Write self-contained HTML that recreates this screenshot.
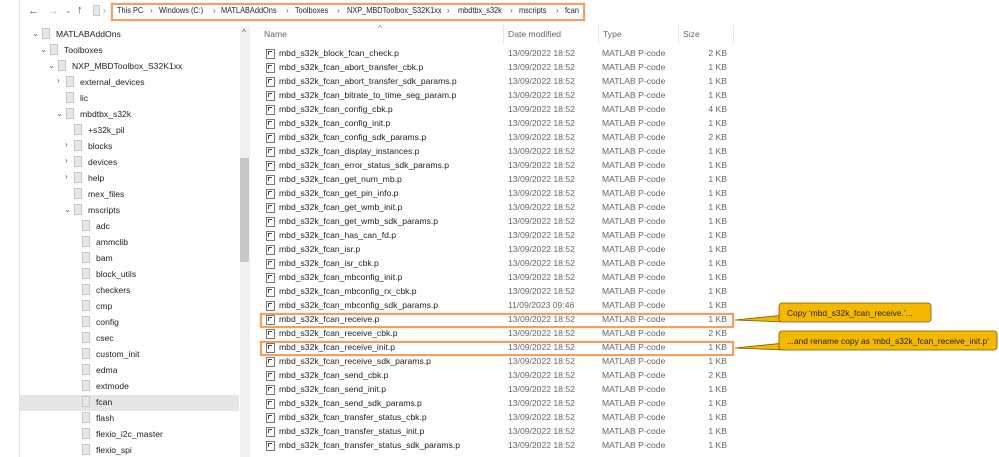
<!DOCTYPE html>
<html><head><meta charset="utf-8"><style>
*{margin:0;padding:0;box-sizing:border-box}
body{width:999px;height:457px;background:#fff;position:relative;overflow:hidden;font-family:"Liberation Sans",sans-serif;font-size:8.6px;color:#222}
.a{position:absolute;white-space:nowrap}
.fold{position:absolute;width:8px;height:11px;background:#e8e8e8;border:1px solid #c8c8c8}
.chev{position:absolute;font-size:8px;color:#555}
.fi{position:absolute;width:9px;height:10px;border:1px solid #777;background:#fff}
.fi:after{content:"";position:absolute;left:1px;top:1px;width:3px;height:3px;border-left:1px solid #444;border-top:1px solid #444}
.g{color:#666}
.bc{position:absolute;top:6px;font-size:8.2px;transform:scaleX(0.9);transform-origin:left}
.sp{position:absolute;top:6px;font-size:8px;color:#555}
</style></head><body>
<div class="a" style="left:19px;top:0;width:1px;height:457px;background:#ddd"></div>
<div class="a" style="left:28px;top:5px;color:#555;font-size:11px">←</div>
<div class="a" style="left:48px;top:5px;color:#bbb;font-size:11px">→</div>
<div class="a" style="left:65px;top:6px;color:#888;font-size:8px">⌄</div>
<div class="a" style="left:77px;top:4px;color:#444;font-size:11px">↑</div>
<div class="fold" style="left:93px;top:5px;width:7px"></div>
<div class="a" style="left:103px;top:6px;color:#888;font-size:8px">›</div>
<div class="a" style="left:111px;top:3px;width:474px;height:18px;border:2px solid #f0a060;box-shadow:0 0 2px #f7c9a8"></div>
<div class="bc" style="left:117px">This PC</div><div class="sp" style="left:150px">›</div>
<div class="bc" style="left:159px">Windows (C:)</div><div class="sp" style="left:213px">›</div>
<div class="bc" style="left:221px">MATLABAddOns</div><div class="sp" style="left:286px">›</div>
<div class="bc" style="left:295px">Toolboxes</div><div class="sp" style="left:337px">›</div>
<div class="bc" style="left:347px">NXP_MBDToolbox_S32K1xx</div><div class="sp" style="left:447px">›</div>
<div class="bc" style="left:458px">mbdtbx_s32k</div><div class="sp" style="left:510px">›</div>
<div class="bc" style="left:519px">mscripts</div><div class="sp" style="left:556px">›</div>
<div class="bc" style="left:565px">fcan</div>
<div class="a" style="left:20px;top:395px;width:219px;height:16px;background:#e5e5e5"></div>
<div class="a" style="left:240px;top:27px;width:10px;height:430px;background:#f0f0f0"></div>
<div class="a" style="left:240px;top:158px;width:9px;height:104px;background:#c8c8c8"></div>
<div class="a" style="left:242px;top:28px;font-size:8px;color:#444">^</div>
<div id="tree"></div>
<div class="a" style="left:378px;top:24px;font-size:8px;color:#777">^</div>
<div class="a g" style="left:264px;top:29px">Name</div>
<div class="a g" style="left:508px;top:29px">Date modified</div>
<div class="a g" style="left:603px;top:29px">Type</div>
<div class="a g" style="left:683px;top:29px">Size</div>
<div class="a" style="left:503px;top:25px;width:1px;height:18px;background:#e5e5e5"></div>
<div class="a" style="left:598px;top:25px;width:1px;height:18px;background:#e5e5e5"></div>
<div class="a" style="left:678px;top:25px;width:1px;height:18px;background:#e5e5e5"></div>
<div class="a" style="left:733px;top:25px;width:1px;height:18px;background:#e5e5e5"></div>
<div id="files"></div>
<div class="a" style="left:260px;top:313px;width:474px;height:15px;border:2px solid #f0a060;box-shadow:0 0 2px #f7c9a8"></div>
<div class="a" style="left:260px;top:341px;width:474px;height:15px;border:2px solid #f0a060;box-shadow:0 0 2px #f7c9a8"></div>
<svg class="a" style="left:0;top:0" width="999" height="457">
<path d="M735 320 L785 315 L785 322 Z" fill="#f5b800" stroke="#7a5c00" stroke-width="0.8"/>
<path d="M735 348 L785 343 L785 350 Z" fill="#f5b800" stroke="#7a5c00" stroke-width="0.8"/>
<rect x="779" y="303" width="152" height="19" rx="3" fill="#f5b800" stroke="#7a5c00" stroke-width="0.8"/>
<rect x="779" y="331" width="218" height="19" rx="3" fill="#f5b800" stroke="#7a5c00" stroke-width="0.8"/>
<path d="M782 314 L782 321 M782 342 L782 349" stroke="#f5b800" stroke-width="2"/>
</svg>
<div class="a" style="left:787px;top:308px;font-size:8.4px;color:#222">Copy ‘mbd_s32k_fcan_receive.’...</div>
<div class="a" style="left:787px;top:336px;font-size:8.4px;color:#222">...and rename copy as ‘mbd_s32k_fcan_receive_init.p’</div>
<script>
var t=[[0,1,"MATLABAddOns"],[1,1,"Toolboxes"],[2,1,"NXP_MBDToolbox_S32K1xx"],[3,2,"external_devices"],[3,0,"lic"],[3,1,"mbdtbx_s32k"],[4,0,"+s32k_pil"],[4,2,"blocks"],[4,2,"devices"],[4,2,"help"],[4,0,"mex_files"],[4,1,"mscripts"],[5,0,"adc"],[5,0,"ammclib"],[5,0,"bam"],[5,0,"block_utils"],[5,0,"checkers"],[5,0,"cmp"],[5,0,"config"],[5,0,"csec"],[5,0,"custom_init"],[5,0,"edma"],[5,0,"extmode"],[5,0,"fcan"],[5,0,"flash"],[5,0,"flexio_i2c_master"],[5,0,"flexio_spi"]];
var h="";t.forEach(function(r,i){var y=28+i*16,x=32+r[0]*8;
if(r[1]==1)h+='<div class="chev" style="left:'+x+'px;top:'+(y+1)+'px">⌄</div>';
if(r[1]==2)h+='<div class="chev" style="left:'+(x+1)+'px;top:'+(y)+'px">›</div>';
h+='<div class="fold" style="left:'+(x+10)+'px;top:'+y+'px"></div><div class="a" style="left:'+(x+24)+'px;top:'+(y+1)+'px">'+r[2]+'</div>';});
document.getElementById("tree").innerHTML=h;
var f=["block_fcan_check","fcan_abort_transfer_cbk","fcan_abort_transfer_sdk_params","fcan_bitrate_to_time_seg_param","fcan_config_cbk","fcan_config_init","fcan_config_sdk_params","fcan_display_instances","fcan_error_status_sdk_params","fcan_get_num_mb","fcan_get_pin_info","fcan_get_wmb_init","fcan_get_wmb_sdk_params","fcan_has_can_fd","fcan_isr","fcan_isr_cbk","fcan_mbconfig_init","fcan_mbconfig_rx_cbk","fcan_mbconfig_sdk_params","fcan_receive","fcan_receive_cbk","fcan_receive_init","fcan_receive_sdk_params","fcan_send_cbk","fcan_send_init","fcan_send_sdk_params","fcan_transfer_status_cbk","fcan_transfer_status_init","fcan_transfer_status_sdk_params"];
var sz={0:2,4:4,6:2,20:2,23:2};h="";
f.forEach(function(n,i){var y=48+i*14;
h+='<div class="fi" style="left:266px;top:'+(y+1)+'px"></div><div class="a" style="left:279px;top:'+y+'px">mbd_s32k_'+n+'.p</div>';
h+='<div class="a g" style="left:508px;top:'+y+'px">'+(i==18?'11/09/2023 09:46':'13/09/2022 18:52')+'</div>';
h+='<div class="a g" style="left:602px;top:'+y+'px">MATLAB P-code</div>';
h+='<div class="a g" style="left:700px;top:'+y+'px;width:27px;text-align:right">'+(sz[i]||1)+' KB</div>';});
document.getElementById("files").innerHTML=h;
</script>
</body></html>
